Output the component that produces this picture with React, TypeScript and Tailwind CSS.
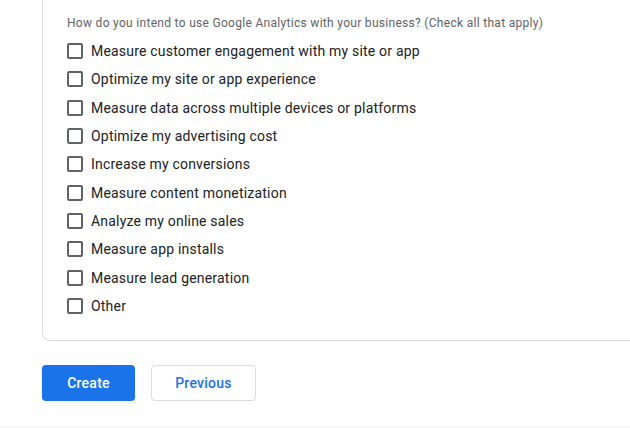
import React from "react";

const items = [
  "Measure customer engagement with my site or app",
  "Optimize my site or app experience",
  "Measure data across multiple devices or platforms",
  "Optimize my advertising cost",
  "Increase my conversions",
  "Measure content monetization",
  "Analyze my online sales",
  "Measure app installs",
  "Measure lead generation",
  "Other",
];

export default function App() {
  return (
    <div
      className="w-[630px] h-[428px] overflow-hidden bg-white flex flex-col"
      style={{ fontFamily: "Roboto, 'Liberation Sans', sans-serif" }}
    >
      <div className="ml-[42px] w-[640px] shrink-0 border-l border-b border-r border-[#dadce0] rounded-b-lg pl-[24px] pt-[15px] pb-[20px]">
        <div className="text-[12px] leading-[16px] tracking-[0.3px] text-[#5f6368]">
          How do you intend to use Google Analytics with your business? (Check all that apply)
        </div>
        <div className="mt-[6px] flex flex-col">
          {items.map((t) => (
            <label key={t} className="h-[28.33px] flex items-center">
              <span className="w-[16px] h-[16px] border-2 border-[#5f6368] rounded-[2px] shrink-0" />
              <span className="ml-[8px] text-[14px] leading-[20px] tracking-[0.2px] text-[#202124]">{t}</span>
            </label>
          ))}
        </div>
      </div>
      <div className="ml-[42px] mt-[24px] flex gap-[16px] shrink-0">
        <button className="w-[93px] h-[36px] rounded-[4px] bg-[#1a73e8] text-white text-[14px] tracking-[0.25px] font-medium">
          Create
        </button>
        <button className="w-[105px] h-[36px] rounded-[4px] border border-[#dadce0] bg-white text-[#1a73e8] text-[14px] tracking-[0.25px] font-medium">
          Previous
        </button>
      </div>
      <div className="flex-1" />
      <div className="h-[3px] bg-[#f8f9fa] shrink-0" />
    </div>
  );
}
